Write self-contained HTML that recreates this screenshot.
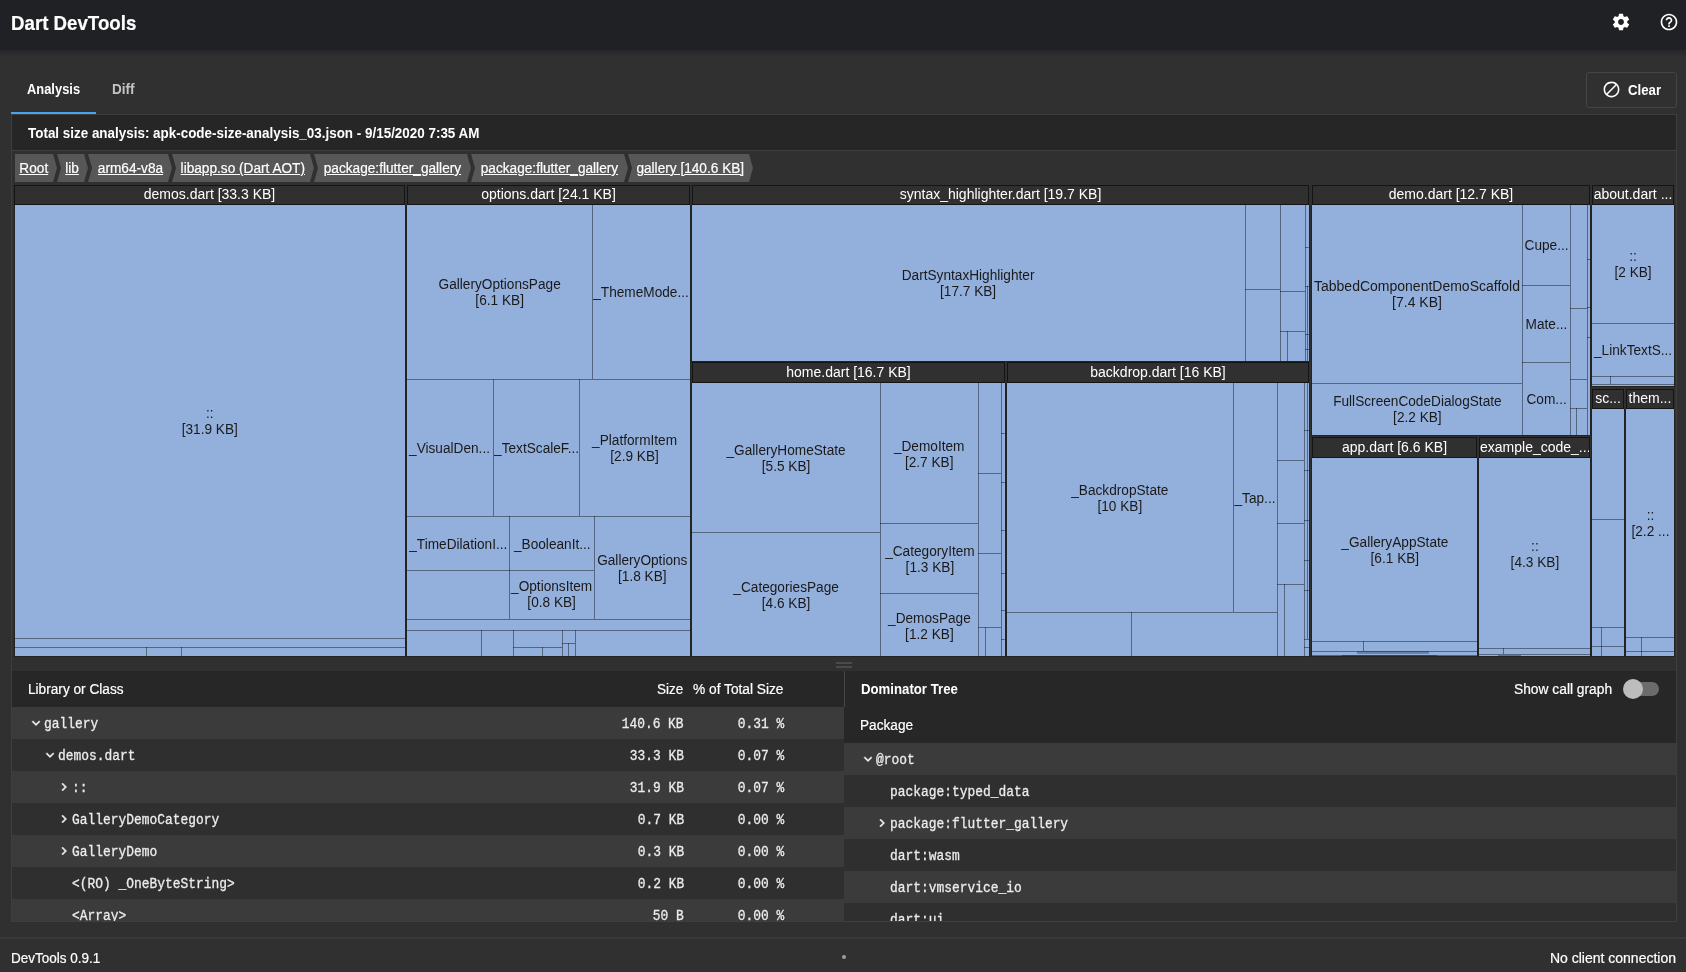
<!DOCTYPE html><html><head><meta charset="utf-8"><style>
*{margin:0;padding:0;box-sizing:border-box}
html,body{width:1686px;height:972px;overflow:hidden;background:#303030;font-family:"Liberation Sans",sans-serif;color:#fff}
body{will-change:transform}
.a{position:absolute}
.t{position:absolute;white-space:nowrap;line-height:1;font-size:14px;-webkit-text-stroke:0.2px currentColor}
.b{-webkit-text-stroke:0}
.b{font-weight:bold;font-size:15px;transform-origin:0 0}
.ln{position:absolute;background:rgba(0,0,0,0.42)}
.sep{position:absolute;background:#232323}
.tm{position:absolute;background:#93b0dc}
.th{position:absolute;background:#303030;border:1px solid #141414;color:#fff;font-size:14px;line-height:16px;text-align:center;white-space:nowrap;overflow:hidden}
.ct{position:absolute;display:flex;align-items:center;justify-content:center;text-align:center;color:#1a1a1a;font-size:14px;line-height:16px;white-space:nowrap;overflow:hidden;padding-top:1px}
.row{position:absolute;height:32px}
.mono{font-family:"Liberation Mono",monospace;font-size:14.5px;color:#ececec;-webkit-text-stroke:0.3px #ececec;transform-origin:0 0;transform:scaleX(0.89)}
.monor{font-family:"Liberation Mono",monospace;font-size:14.5px;color:#ececec;-webkit-text-stroke:0.3px #ececec;transform-origin:100% 0;transform:scaleX(0.89)}
</style></head><body>
<div class="a" style="left:0;top:0;width:1686px;height:50px;background:#202124"></div>
<div class="a" style="left:0;top:50px;width:1686px;height:7px;background:linear-gradient(#252628,#303030)"></div>
<div class="t" style="left:11px;top:12px;font-size:21px;font-weight:bold;transform-origin:0 0;transform:scaleX(0.89)">Dart DevTools</div>
<svg class="a" style="left:1611px;top:12px" width="20" height="20" viewBox="0 0 24 24"><path fill="#fff" d="M19.43 12.98c.04-.32.07-.64.07-.98s-.03-.66-.07-.98l2.11-1.65c.19-.15.24-.42.12-.64l-2-3.46c-.12-.22-.39-.3-.61-.22l-2.49 1c-.52-.4-1.08-.73-1.69-.98l-.38-2.65C14.46 2.18 14.25 2 14 2h-4c-.25 0-.46.18-.49.42l-.38 2.65c-.61.25-1.17.59-1.69.98l-2.49-1c-.23-.09-.49 0-.61.22l-2 3.46c-.13.22-.07.49.12.64l2.11 1.65c-.04.32-.07.65-.07.98s.03.66.07.98l-2.11 1.65c-.19.15-.24.42-.12.64l2 3.46c.12.22.39.3.61.22l2.49-1c.52.4 1.08.73 1.69.98l.38 2.65c.03.24.24.42.49.42h4c.25 0 .46-.18.49-.42l.38-2.65c.61-.25 1.17-.59 1.69-.98l2.49 1c.23.09.49 0 .61-.22l2-3.46c.12-.22.07-.49-.12-.64l-2.11-1.65zM12 15.5c-1.93 0-3.5-1.57-3.5-3.5s1.57-3.5 3.5-3.5 3.5 1.57 3.5 3.5-1.57 3.5-3.5 3.5z"/></svg>
<svg class="a" style="left:1659px;top:12px" width="20" height="20" viewBox="0 0 24 24"><path fill="#fff" d="M11 18h2v-2h-2v2zm1-16C6.48 2 2 6.48 2 12s4.48 10 10 10 10-4.48 10-10S17.52 2 12 2zm0 18c-4.41 0-8-3.59-8-8s3.59-8 8-8 8 3.59 8 8-3.59 8-8 8zm0-14c-2.21 0-4 1.79-4 4h2c0-1.1.9-2 2-2s2 .9 2 2c0 2-3 1.75-3 5h2c0-2.25 3-2.5 3-5 0-2.21-1.79-4-4-4z"/></svg>
<div class="t b" style="left:27px;top:81px;transform:scaleX(0.86)">Analysis</div>
<div class="t b" style="left:112px;top:81px;color:#c4c4c4;transform:scaleX(0.9)">Diff</div>
<div class="a" style="left:11px;top:112px;width:85px;height:2px;background:#4aa4ec"></div>
<div class="a" style="left:1586px;top:72px;width:91px;height:36px;border:1px solid #454545;border-radius:3px"></div>
<svg class="a" style="left:1601.5px;top:80.4px" width="19" height="19" viewBox="0 0 24 24"><path fill="#fff" d="M12 2C6.48 2 2 6.48 2 12s4.48 10 10 10 10-4.48 10-10S17.52 2 12 2zM4 12c0-4.42 3.58-8 8-8 1.85 0 3.55.63 4.9 1.69L5.69 16.9C4.63 15.55 4 13.85 4 12zm8 8c-1.85 0-3.55-.63-4.9-1.69L18.31 7.1C19.37 8.45 20 10.15 20 12c0 4.42-3.58 8-8 8z"/></svg>
<div class="t b" style="left:1628px;top:82px;transform:scaleX(0.88)">Clear</div>
<div class="a" style="left:11px;top:114px;width:1666px;height:808px;border:1px solid #3e3e3e;background:#303030"></div>
<div class="a" style="left:12px;top:115px;width:1664px;height:35px;background:#262626"></div>
<div class="a" style="left:12px;top:150px;width:1664px;height:1px;background:#3e3e3e"></div>
<div class="t b" style="left:28px;top:125px;transform:scaleX(0.895)">Total size analysis: apk-code-size-analysis_03.json - 9/15/2020 7:35 AM</div>
<svg class="a" style="left:0;top:154px" width="800" height="28"><polygon points="15,0 53,0 57,14 53,28 15,28 15,14" fill="#575757"/><polygon points="57,0 84,0 88,14 84,28 57,28 61,14" fill="#575757"/><polygon points="88,0 168,0 172,14 168,28 88,28 92,14" fill="#575757"/><polygon points="172,0 310,0 314,14 310,28 172,28 176,14" fill="#575757"/><polygon points="314,0 467,0 471,14 467,28 314,28 318,14" fill="#575757"/><polygon points="471,0 624,0 628,14 624,28 471,28 475,14" fill="#575757"/><polygon points="628,0 749,0 753,14 749,28 628,28 632,14" fill="#575757"/></svg>
<div class="t" style="left:15px;top:161px;width:38px;text-align:center"><span style="display:inline-block;text-decoration:underline;transform:scaleX(0.975)">Root</span></div>
<div class="t" style="left:61px;top:161px;width:23px;text-align:center"><span style="display:inline-block;text-decoration:underline;transform:scaleX(0.975)">lib</span></div>
<div class="t" style="left:92px;top:161px;width:76px;text-align:center"><span style="display:inline-block;text-decoration:underline;transform:scaleX(0.975)">arm64-v8a</span></div>
<div class="t" style="left:176px;top:161px;width:134px;text-align:center"><span style="display:inline-block;text-decoration:underline;transform:scaleX(0.975)">libapp.so (Dart AOT)</span></div>
<div class="t" style="left:318px;top:161px;width:149px;text-align:center"><span style="display:inline-block;text-decoration:underline;transform:scaleX(0.975)">package:flutter_gallery</span></div>
<div class="t" style="left:475px;top:161px;width:149px;text-align:center"><span style="display:inline-block;text-decoration:underline;transform:scaleX(0.975)">package:flutter_gallery</span></div>
<div class="t" style="left:632px;top:161px;width:117px;text-align:center"><span style="display:inline-block;text-decoration:underline;transform:scaleX(0.975)">gallery [140.6 KB]</span></div>
<div class="sep" style="left:14px;top:205px;width:392px;height:452px;"></div>
<div class="sep" style="left:406px;top:205px;width:285px;height:452px;"></div>
<div class="sep" style="left:691px;top:205px;width:619px;height:157px;"></div>
<div class="sep" style="left:691px;top:383px;width:315px;height:274px;"></div>
<div class="sep" style="left:1006px;top:383px;width:304px;height:274px;"></div>
<div class="sep" style="left:1311px;top:205px;width:280px;height:231px;"></div>
<div class="sep" style="left:1311px;top:458px;width:167px;height:199px;"></div>
<div class="sep" style="left:1478px;top:458px;width:113px;height:199px;"></div>
<div class="sep" style="left:1591px;top:205px;width:84px;height:182px;"></div>
<div class="sep" style="left:1591px;top:409px;width:34px;height:248px;"></div>
<div class="sep" style="left:1625px;top:409px;width:50px;height:248px;"></div>
<div class="tm" style="left:15px;top:205px;width:390px;height:451px;"></div>
<div class="th" style="left:14px;top:185px;width:391px;height:20px;padding-top:0px">demos.dart [33.3 KB]</div>
<div class="tm" style="left:407px;top:205px;width:283px;height:451px;"></div>
<div class="th" style="left:407px;top:185px;width:283px;height:20px;padding-top:0px">options.dart [24.1 KB]</div>
<div class="tm" style="left:692px;top:205px;width:617px;height:156px;"></div>
<div class="th" style="left:692px;top:185px;width:617px;height:20px;padding-top:0px">syntax_highlighter.dart [19.7 KB]</div>
<div class="tm" style="left:692px;top:383px;width:313px;height:273px;"></div>
<div class="th" style="left:692px;top:362px;width:313px;height:21px;padding-top:1px">home.dart [16.7 KB]</div>
<div class="tm" style="left:1007px;top:383px;width:302px;height:273px;"></div>
<div class="th" style="left:1007px;top:362px;width:302px;height:21px;padding-top:1px">backdrop.dart [16 KB]</div>
<div class="tm" style="left:1312px;top:205px;width:278px;height:230px;"></div>
<div class="th" style="left:1312px;top:185px;width:278px;height:20px;padding-top:0px">demo.dart [12.7 KB]</div>
<div class="tm" style="left:1312px;top:458px;width:165px;height:198px;"></div>
<div class="th" style="left:1312px;top:437px;width:165px;height:21px;padding-top:1px">app.dart [6.6 KB]</div>
<div class="tm" style="left:1479px;top:458px;width:111px;height:198px;"></div>
<div class="th" style="left:1479px;top:437px;width:111px;height:21px;padding-top:1px">example_code_...</div>
<div class="tm" style="left:1592px;top:205px;width:82px;height:181px;"></div>
<div class="th" style="left:1592px;top:185px;width:82px;height:20px;padding-top:0px">about.dart ...</div>
<div class="tm" style="left:1592px;top:409px;width:32px;height:247px;"></div>
<div class="th" style="left:1592px;top:389px;width:32px;height:20px;padding-top:0px">sc...</div>
<div class="tm" style="left:1626px;top:409px;width:48px;height:247px;"></div>
<div class="th" style="left:1626px;top:389px;width:48px;height:20px;padding-top:0px">them...</div>
<div class="ln" style="left:15px;top:638px;width:390px;height:1px;"></div>
<div class="ln" style="left:15px;top:647px;width:390px;height:1px;"></div>
<div class="ln" style="left:146px;top:647px;width:1px;height:9px;"></div>
<div class="ln" style="left:181px;top:647px;width:1px;height:9px;"></div>
<div class="ct" style="left:15px;top:204px;width:390px;height:433px"><span style="display:inline-block;transform:scaleX(0.975)">::<br>[31.9 KB]</span></div>
<div class="ln" style="left:592px;top:205px;width:1px;height:174px;"></div>
<div class="ln" style="left:407px;top:379px;width:283px;height:1px;"></div>
<div class="ln" style="left:493px;top:379px;width:1px;height:137px;"></div>
<div class="ln" style="left:579px;top:379px;width:1px;height:137px;"></div>
<div class="ln" style="left:407px;top:516px;width:283px;height:1px;"></div>
<div class="ln" style="left:509px;top:516px;width:1px;height:103px;"></div>
<div class="ln" style="left:594px;top:516px;width:1px;height:103px;"></div>
<div class="ln" style="left:407px;top:570px;width:102px;height:1px;"></div>
<div class="ln" style="left:509px;top:570px;width:85px;height:1px;"></div>
<div class="ln" style="left:407px;top:619px;width:283px;height:1px;"></div>
<div class="ln" style="left:407px;top:630px;width:283px;height:1px;"></div>
<div class="ln" style="left:481px;top:630px;width:1px;height:26px;"></div>
<div class="ln" style="left:513px;top:630px;width:1px;height:26px;"></div>
<div class="ln" style="left:562px;top:630px;width:1px;height:26px;"></div>
<div class="ln" style="left:575px;top:630px;width:1px;height:26px;"></div>
<div class="ln" style="left:513px;top:647px;width:49px;height:1px;"></div>
<div class="ln" style="left:542px;top:647px;width:1px;height:9px;"></div>
<div class="ln" style="left:562px;top:643px;width:13px;height:1px;"></div>
<div class="ln" style="left:568px;top:643px;width:1px;height:13px;"></div>
<div class="ct" style="left:407px;top:204px;width:185px;height:174px"><span style="display:inline-block;transform:scaleX(0.975)">GalleryOptionsPage<br>[6.1 KB]</span></div>
<div class="ct" style="left:593px;top:204px;width:97px;height:174px"><span style="display:inline-block;transform:scaleX(0.975)">_ThemeMode...</span></div>
<div class="ct" style="left:407px;top:379px;width:86px;height:137px"><span style="display:inline-block;transform:scaleX(0.975)">_VisualDen...</span></div>
<div class="ct" style="left:494px;top:379px;width:85px;height:137px"><span style="display:inline-block;transform:scaleX(0.975)">_TextScaleF...</span></div>
<div class="ct" style="left:580px;top:379px;width:110px;height:137px"><span style="display:inline-block;transform:scaleX(0.975)">_PlatformItem<br>[2.9 KB]</span></div>
<div class="ct" style="left:407px;top:516px;width:102px;height:54px"><span style="display:inline-block;transform:scaleX(0.975)">_TimeDilationI...</span></div>
<div class="ct" style="left:510px;top:516px;width:84px;height:54px"><span style="display:inline-block;transform:scaleX(0.975)">_BooleanIt...</span></div>
<div class="ct" style="left:510px;top:568px;width:84px;height:51px"><span style="display:inline-block;transform:scaleX(0.975)">_OptionsItem<br>[0.8 KB]</span></div>
<div class="ct" style="left:595px;top:516px;width:95px;height:103px"><span style="display:inline-block;transform:scaleX(0.975)">GalleryOptions<br>[1.8 KB]</span></div>
<div class="ln" style="left:1245px;top:205px;width:1px;height:156px;"></div>
<div class="ln" style="left:1280px;top:205px;width:1px;height:156px;"></div>
<div class="ln" style="left:1305px;top:205px;width:1px;height:156px;"></div>
<div class="ln" style="left:1245px;top:289px;width:35px;height:1px;"></div>
<div class="ln" style="left:1280px;top:291px;width:25px;height:1px;"></div>
<div class="ln" style="left:1280px;top:331px;width:25px;height:1px;"></div>
<div class="ln" style="left:1287px;top:331px;width:1px;height:30px;"></div>
<div class="ln" style="left:1305px;top:247px;width:4px;height:1px;"></div>
<div class="ln" style="left:1305px;top:286px;width:4px;height:1px;"></div>
<div class="ln" style="left:1305px;top:334px;width:4px;height:1px;"></div>
<div class="ln" style="left:1305px;top:349px;width:4px;height:1px;"></div>
<div class="ln" style="left:1307px;top:286px;width:1px;height:75px;"></div>
<div class="ct" style="left:692px;top:204px;width:553px;height:156px"><span style="display:inline-block;transform:scaleX(0.975)">DartSyntaxHighlighter<br>[17.7 KB]</span></div>
<div class="ln" style="left:880px;top:383px;width:1px;height:273px;"></div>
<div class="ln" style="left:978px;top:383px;width:1px;height:273px;"></div>
<div class="ln" style="left:1001px;top:383px;width:1px;height:273px;"></div>
<div class="ln" style="left:692px;top:532px;width:188px;height:1px;"></div>
<div class="ln" style="left:880px;top:523px;width:98px;height:1px;"></div>
<div class="ln" style="left:880px;top:593px;width:98px;height:1px;"></div>
<div class="ln" style="left:978px;top:473px;width:23px;height:1px;"></div>
<div class="ln" style="left:978px;top:553px;width:23px;height:1px;"></div>
<div class="ln" style="left:978px;top:627px;width:23px;height:1px;"></div>
<div class="ln" style="left:985px;top:627px;width:1px;height:29px;"></div>
<div class="ln" style="left:1001px;top:433px;width:4px;height:1px;"></div>
<div class="ln" style="left:1001px;top:482px;width:4px;height:1px;"></div>
<div class="ln" style="left:1001px;top:530px;width:4px;height:1px;"></div>
<div class="ln" style="left:1001px;top:573px;width:4px;height:1px;"></div>
<div class="ln" style="left:1001px;top:610px;width:4px;height:1px;"></div>
<div class="ln" style="left:1001px;top:639px;width:4px;height:1px;"></div>
<div class="ct" style="left:692px;top:383px;width:188px;height:149px"><span style="display:inline-block;transform:scaleX(0.975)">_GalleryHomeState<br>[5.5 KB]</span></div>
<div class="ct" style="left:692px;top:533px;width:188px;height:123px"><span style="display:inline-block;transform:scaleX(0.975)">_CategoriesPage<br>[4.6 KB]</span></div>
<div class="ct" style="left:881px;top:383px;width:97px;height:140px"><span style="display:inline-block;transform:scaleX(0.975)">_DemoItem<br>[2.7 KB]</span></div>
<div class="ct" style="left:881px;top:524px;width:97px;height:69px"><span style="display:inline-block;transform:scaleX(0.975)">_CategoryItem<br>[1.3 KB]</span></div>
<div class="ct" style="left:881px;top:594px;width:97px;height:62px"><span style="display:inline-block;transform:scaleX(0.975)">_DemosPage<br>[1.2 KB]</span></div>
<div class="ln" style="left:1233px;top:383px;width:1px;height:229px;"></div>
<div class="ln" style="left:1277px;top:383px;width:1px;height:273px;"></div>
<div class="ln" style="left:1304px;top:383px;width:1px;height:273px;"></div>
<div class="ln" style="left:1007px;top:612px;width:270px;height:1px;"></div>
<div class="ln" style="left:1131px;top:612px;width:1px;height:44px;"></div>
<div class="ln" style="left:1277px;top:460px;width:27px;height:1px;"></div>
<div class="ln" style="left:1277px;top:523px;width:27px;height:1px;"></div>
<div class="ln" style="left:1277px;top:584px;width:27px;height:1px;"></div>
<div class="ln" style="left:1284px;top:584px;width:1px;height:72px;"></div>
<div class="ln" style="left:1304px;top:430px;width:5px;height:1px;"></div>
<div class="ln" style="left:1304px;top:470px;width:5px;height:1px;"></div>
<div class="ln" style="left:1304px;top:520px;width:5px;height:1px;"></div>
<div class="ln" style="left:1304px;top:560px;width:5px;height:1px;"></div>
<div class="ln" style="left:1304px;top:590px;width:5px;height:1px;"></div>
<div class="ln" style="left:1304px;top:639px;width:5px;height:1px;"></div>
<div class="ln" style="left:1304px;top:647px;width:5px;height:1px;"></div>
<div class="ln" style="left:1307px;top:383px;width:1px;height:256px;"></div>
<div class="ct" style="left:1007px;top:383px;width:226px;height:229px"><span style="display:inline-block;transform:scaleX(0.975)">_BackdropState<br>[10 KB]</span></div>
<div class="ct" style="left:1234px;top:383px;width:43px;height:229px"><span style="display:inline-block;transform:scaleX(0.975)">_Tap...</span></div>
<div class="ln" style="left:1522px;top:205px;width:1px;height:230px;"></div>
<div class="ln" style="left:1570px;top:205px;width:1px;height:230px;"></div>
<div class="ln" style="left:1587px;top:205px;width:1px;height:230px;"></div>
<div class="ln" style="left:1312px;top:383px;width:210px;height:1px;"></div>
<div class="ln" style="left:1522px;top:285px;width:48px;height:1px;"></div>
<div class="ln" style="left:1522px;top:362px;width:48px;height:1px;"></div>
<div class="ln" style="left:1570px;top:308px;width:17px;height:1px;"></div>
<div class="ln" style="left:1570px;top:379px;width:17px;height:1px;"></div>
<div class="ln" style="left:1570px;top:408px;width:17px;height:1px;"></div>
<div class="ln" style="left:1576px;top:408px;width:1px;height:27px;"></div>
<div class="ln" style="left:1587px;top:259px;width:3px;height:1px;"></div>
<div class="ln" style="left:1587px;top:307px;width:3px;height:1px;"></div>
<div class="ln" style="left:1587px;top:337px;width:3px;height:1px;"></div>
<div class="ct" style="left:1312px;top:204px;width:210px;height:178px"><span style="display:inline-block;transform:scaleX(1.0)">TabbedComponentDemoScaffold<br>[7.4 KB]</span></div>
<div class="ct" style="left:1312px;top:383px;width:210px;height:51px"><span style="display:inline-block;transform:scaleX(0.975)">FullScreenCodeDialogState<br>[2.2 KB]</span></div>
<div class="ct" style="left:1523px;top:204px;width:47px;height:80px"><span style="display:inline-block;transform:scaleX(0.975)">Cupe...</span></div>
<div class="ct" style="left:1523px;top:285px;width:47px;height:76px"><span style="display:inline-block;transform:scaleX(0.975)">Mate...</span></div>
<div class="ct" style="left:1523px;top:362px;width:47px;height:72px"><span style="display:inline-block;transform:scaleX(0.975)">Com...</span></div>
<div class="ln" style="left:1312px;top:641px;width:165px;height:1px;"></div>
<div class="ln" style="left:1363px;top:641px;width:1px;height:10px;"></div>
<div class="ln" style="left:1312px;top:651px;width:165px;height:1px;"></div>
<div class="ln" style="left:1312px;top:655px;width:165px;height:1px;"></div>
<div class="ln" style="left:1357px;top:651px;width:72px;height:3px;opacity:.6"></div>
<div class="ln" style="left:1342px;top:655px;width:95px;height:1px;opacity:.8"></div>
<div class="ct" style="left:1312px;top:458px;width:165px;height:183px"><span style="display:inline-block;transform:scaleX(0.975)">_GalleryAppState<br>[6.1 KB]</span></div>
<div class="ln" style="left:1479px;top:648px;width:111px;height:1px;"></div>
<div class="ln" style="left:1503px;top:648px;width:1px;height:6px;"></div>
<div class="ln" style="left:1479px;top:654px;width:111px;height:1px;"></div>
<div class="ln" style="left:1498px;top:655px;width:23px;height:1px;opacity:.8"></div>
<div class="ct" style="left:1479px;top:458px;width:111px;height:190px"><span style="display:inline-block;transform:scaleX(0.975)">::<br>[4.3 KB]</span></div>
<div class="ln" style="left:1592px;top:323px;width:82px;height:1px;"></div>
<div class="ln" style="left:1592px;top:376px;width:82px;height:1px;"></div>
<div class="ln" style="left:1592px;top:384px;width:82px;height:1px;"></div>
<div class="ln" style="left:1610px;top:376px;width:1px;height:8px;"></div>
<div class="ct" style="left:1592px;top:204px;width:82px;height:118px"><span style="display:inline-block;transform:scaleX(0.975)">::<br>[2 KB]</span></div>
<div class="ct" style="left:1592px;top:323px;width:82px;height:52px"><span style="display:inline-block;transform:scaleX(0.975)">_LinkTextS...</span></div>
<div class="ln" style="left:1592px;top:519px;width:32px;height:1px;"></div>
<div class="ln" style="left:1592px;top:627px;width:32px;height:1px;"></div>
<div class="ln" style="left:1601px;top:627px;width:1px;height:29px;"></div>
<div class="ln" style="left:1592px;top:646px;width:32px;height:1px;"></div>
<div class="ln" style="left:1626px;top:637px;width:48px;height:1px;"></div>
<div class="ln" style="left:1641px;top:637px;width:1px;height:19px;"></div>
<div class="ln" style="left:1626px;top:651px;width:48px;height:1px;"></div>
<div class="ct" style="left:1626px;top:408px;width:48px;height:228px"><span style="display:inline-block;transform:scaleX(0.975)">::<br>[2.2 ...</span></div>
<div class="a" style="left:836px;top:662px;width:16px;height:2px;background:#4a4a4a"></div>
<div class="a" style="left:836px;top:666px;width:16px;height:2px;background:#4a4a4a"></div>
<div class="a" style="left:12px;top:671px;width:1664px;height:36px;background:#272727"></div>
<div class="a" style="left:844px;top:671px;width:1px;height:36px;background:#474747"></div>
<div class="t" style="left:28px;top:682px;transform-origin:0 0;transform:scaleX(0.975)">Library or Class</div>
<div class="t" style="left:657px;top:682px;transform-origin:0 0;transform:scaleX(0.96)">Size</div>
<div class="t" style="left:693px;top:682px;transform-origin:0 0;transform:scaleX(0.98)">% of Total Size</div>
<div class="t b" style="left:861px;top:681px;transform:scaleX(0.88)">Dominator Tree</div>
<div class="t" style="left:1514px;top:682px;transform-origin:0 0;transform:scaleX(0.985)">Show call graph</div>
<div class="a" style="left:1624px;top:682px;width:35px;height:14px;border-radius:7px;background:#6b6b6b"></div>
<div class="a" style="left:1623px;top:679px;width:20px;height:20px;border-radius:10px;background:#bdbdbd"></div>
<div class="a" style="left:12px;top:707px;width:832px;height:214px;overflow:hidden">
<div class="row" style="left:0;top:0px;width:832px;background:#3b3b3b">
<svg class="a" style="left:16px;top:8px" width="16" height="16" viewBox="0 0 24 24"><path fill="#ececec" stroke="#ececec" stroke-width="0.7" d="M7.41 8.59L12 13.17l4.59-4.58L18 10l-6 6-6-6 1.41-1.41z"/></svg>
<div class="t mono" style="left:31.5px;top:10px">gallery</div>
<div class="t monor" style="right:160px;top:10px">140.6 KB</div>
<div class="t monor" style="right:60px;top:10px">0.31 %</div>
</div>
<div class="row" style="left:0;top:32px;width:832px;background:#2f2f2f">
<svg class="a" style="left:30px;top:8px" width="16" height="16" viewBox="0 0 24 24"><path fill="#ececec" stroke="#ececec" stroke-width="0.7" d="M7.41 8.59L12 13.17l4.59-4.58L18 10l-6 6-6-6 1.41-1.41z"/></svg>
<div class="t mono" style="left:45.5px;top:10px">demos.dart</div>
<div class="t monor" style="right:160px;top:10px">33.3 KB</div>
<div class="t monor" style="right:60px;top:10px">0.07 %</div>
</div>
<div class="row" style="left:0;top:64px;width:832px;background:#3b3b3b">
<svg class="a" style="left:44px;top:8px" width="16" height="16" viewBox="0 0 24 24"><path fill="#ececec" stroke="#ececec" stroke-width="0.7" d="M8.59 16.59L13.17 12 8.59 7.41 10 6l6 6-6 6-1.41-1.41z"/></svg>
<div class="t mono" style="left:59.5px;top:10px">::</div>
<div class="t monor" style="right:160px;top:10px">31.9 KB</div>
<div class="t monor" style="right:60px;top:10px">0.07 %</div>
</div>
<div class="row" style="left:0;top:96px;width:832px;background:#2f2f2f">
<svg class="a" style="left:44px;top:8px" width="16" height="16" viewBox="0 0 24 24"><path fill="#ececec" stroke="#ececec" stroke-width="0.7" d="M8.59 16.59L13.17 12 8.59 7.41 10 6l6 6-6 6-1.41-1.41z"/></svg>
<div class="t mono" style="left:59.5px;top:10px">GalleryDemoCategory</div>
<div class="t monor" style="right:160px;top:10px">0.7 KB</div>
<div class="t monor" style="right:60px;top:10px">0.00 %</div>
</div>
<div class="row" style="left:0;top:128px;width:832px;background:#3b3b3b">
<svg class="a" style="left:44px;top:8px" width="16" height="16" viewBox="0 0 24 24"><path fill="#ececec" stroke="#ececec" stroke-width="0.7" d="M8.59 16.59L13.17 12 8.59 7.41 10 6l6 6-6 6-1.41-1.41z"/></svg>
<div class="t mono" style="left:59.5px;top:10px">GalleryDemo</div>
<div class="t monor" style="right:160px;top:10px">0.3 KB</div>
<div class="t monor" style="right:60px;top:10px">0.00 %</div>
</div>
<div class="row" style="left:0;top:160px;width:832px;background:#2f2f2f">
<div class="t mono" style="left:59.5px;top:10px">&lt;(RO) _OneByteString&gt;</div>
<div class="t monor" style="right:160px;top:10px">0.2 KB</div>
<div class="t monor" style="right:60px;top:10px">0.00 %</div>
</div>
<div class="row" style="left:0;top:192px;width:832px;background:#3b3b3b">
<div class="t mono" style="left:59.5px;top:10px">&lt;Array&gt;</div>
<div class="t monor" style="right:160px;top:10px">50 B</div>
<div class="t monor" style="right:60px;top:10px">0.00 %</div>
</div>
</div>
<div class="a" style="left:844px;top:707px;width:832px;height:36px;background:#272727"></div>
<div class="t" style="left:860px;top:718px;transform-origin:0 0;transform:scaleX(0.975)">Package</div>
<div class="a" style="left:844px;top:743px;width:832px;height:178px;overflow:hidden">
<div class="row" style="left:0;top:0px;width:832px;background:#3b3b3b">
<svg class="a" style="left:16px;top:8px" width="16" height="16" viewBox="0 0 24 24"><path fill="#ececec" stroke="#ececec" stroke-width="0.7" d="M7.41 8.59L12 13.17l4.59-4.58L18 10l-6 6-6-6 1.41-1.41z"/></svg>
<div class="t mono" style="left:31.5px;top:10px">@root</div>
</div>
<div class="row" style="left:0;top:32px;width:832px;background:#2f2f2f">
<div class="t mono" style="left:45.5px;top:10px">package:typed_data</div>
</div>
<div class="row" style="left:0;top:64px;width:832px;background:#3b3b3b">
<svg class="a" style="left:30px;top:8px" width="16" height="16" viewBox="0 0 24 24"><path fill="#ececec" stroke="#ececec" stroke-width="0.7" d="M8.59 16.59L13.17 12 8.59 7.41 10 6l6 6-6 6-1.41-1.41z"/></svg>
<div class="t mono" style="left:45.5px;top:10px">package:flutter_gallery</div>
</div>
<div class="row" style="left:0;top:96px;width:832px;background:#2f2f2f">
<div class="t mono" style="left:45.5px;top:10px">dart:wasm</div>
</div>
<div class="row" style="left:0;top:128px;width:832px;background:#3b3b3b">
<div class="t mono" style="left:45.5px;top:10px">dart:vmservice_io</div>
</div>
<div class="row" style="left:0;top:160px;width:832px;background:#2f2f2f">
<div class="t mono" style="left:45.5px;top:10px">dart:ui</div>
</div>
</div>
<div class="a" style="left:0;top:937px;width:1686px;height:2px;background:#3a3a3a"></div>
<div class="t" style="left:11px;top:951px;transform-origin:0 0;transform:scaleX(0.965)">DevTools 0.9.1</div>
<div class="a" style="left:842px;top:955px;width:4px;height:4px;border-radius:2px;background:#9e9e9e"></div>
<div class="t" style="right:10px;top:951px">No client connection</div>
</body></html>
